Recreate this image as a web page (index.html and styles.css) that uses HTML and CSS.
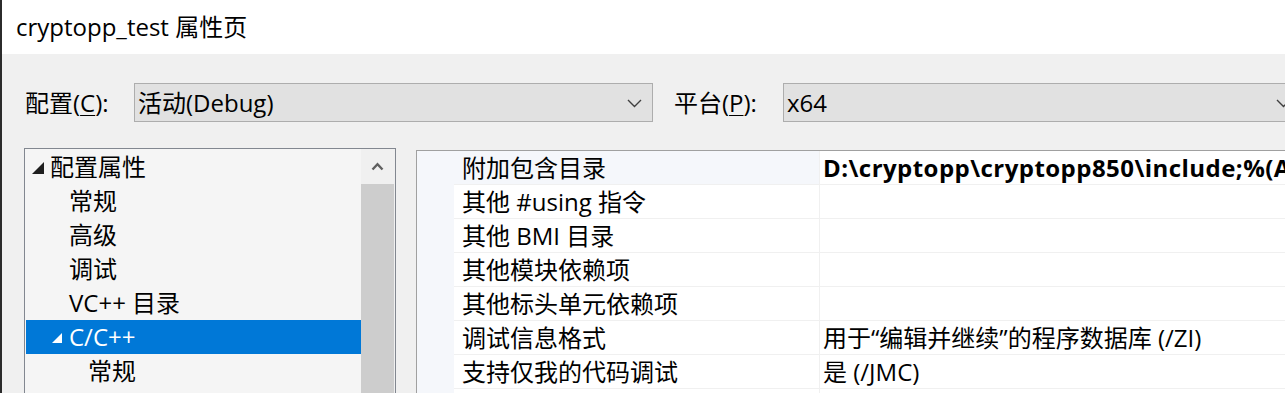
FILE: index.html
```html
<!DOCTYPE html>
<html lang="zh-CN">
<head>
<meta charset="utf-8">
<title>cryptopp_test 属性页</title>
<link rel="stylesheet" href="styles.css">
</head>
<body>
<div class="window">
  <div class="titlebar">cryptopp_test 属性页</div>
  <div class="content">
    <div class="config-row">
      <span class="label">配置(<u>C</u>):</span>
      <div class="combo">
        <span class="combo-text">活动(Debug)</span>
        <svg class="chev" width="15" height="9" viewBox="0 0 15 9"><polyline points="1,1 7.5,7.5 14,1" fill="none" stroke="#404040" stroke-width="1.4"/></svg>
      </div>
      <span class="label label-platform">平台(<u>P</u>):</span>
      <div class="combo">
        <span class="combo-text">x64</span>
        <svg class="chev" width="15" height="9" viewBox="0 0 15 9"><polyline points="1,1 7.5,7.5 14,1" fill="none" stroke="#404040" stroke-width="1.4"/></svg>
      </div>
    </div>
    <div class="panels">
      <div class="tree">
        <div class="tree-list">
          <div class="tree-row lvl0">
            <svg class="tri" width="12" height="12" viewBox="0 0 12 12"><polygon points="12,0 12,12 0,12" fill="#1e1e1e"/></svg>
            <span>配置属性</span>
          </div>
          <div class="tree-row lvl1">常规</div>
          <div class="tree-row lvl1">高级</div>
          <div class="tree-row lvl1">调试</div>
          <div class="tree-row lvl1">VC++ 目录</div>
          <div class="tree-row lvl1x selected">
            <svg class="tri small" width="10" height="10" viewBox="0 0 10 10"><polygon points="10,0 10,10 0,10" fill="#ffffff"/></svg>
            <span>C/C++</span>
          </div>
          <div class="tree-row lvl2">常规</div>
        </div>
        <div class="scrollbar">
          <div class="sb-btn">
            <svg width="13" height="9" viewBox="0 0 13 9"><polyline points="1.5,7.5 6.5,2.2 11.5,7.5" fill="none" stroke="#606060" stroke-width="2.4"/></svg>
          </div>
          <div class="sb-thumb"></div>
        </div>
      </div>
      <div class="grid">
        <div class="gutter"></div>
        <div class="grid-table">
          <div class="grid-row active">
            <div class="cell name">附加包含目录</div>
            <div class="cell value bold">D:\cryptopp\cryptopp850\include;%(AdditionalIncludeDirectories)</div>
          </div>
          <div class="grid-row">
            <div class="cell name">其他 #using 指令</div>
            <div class="cell value"></div>
          </div>
          <div class="grid-row">
            <div class="cell name">其他 BMI 目录</div>
            <div class="cell value"></div>
          </div>
          <div class="grid-row">
            <div class="cell name">其他模块依赖项</div>
            <div class="cell value"></div>
          </div>
          <div class="grid-row">
            <div class="cell name">其他标头单元依赖项</div>
            <div class="cell value"></div>
          </div>
          <div class="grid-row">
            <div class="cell name">调试信息格式</div>
            <div class="cell value">用于“编辑并继续”的程序数据库 (/ZI)</div>
          </div>
          <div class="grid-row">
            <div class="cell name">支持仅我的代码调试</div>
            <div class="cell value">是 (/JMC)</div>
          </div>
          <div class="grid-row">
            <div class="cell name"></div>
            <div class="cell value"></div>
          </div>
        </div>
      </div>
    </div>
  </div>
</div>
</body>
</html>
```
FILE: styles.css
```css
* { box-sizing: border-box; }
html, body {
  margin: 0;
  padding: 0;
  width: 1285px;
  height: 393px;
  overflow: hidden;
  background: #f0f0f0;
}
body {
  font-family: "Open Sans", "Noto Sans CJK SC", sans-serif;
  font-size: 24px;
  color: #000;
}
.window {
  width: 1285px;
  height: 393px;
  border-left: 2px solid #2b2b2b;
  display: flex;
  flex-direction: column;
  overflow: hidden;
}
.titlebar {
  height: 54px;
  flex: none;
  background: #ffffff;
  line-height: 54px;
  padding-left: 14px;
  white-space: nowrap;
}
.content {
  flex: 1;
  background: #f0f0f0;
  min-height: 0;
}
.config-row {
  margin-top: 29px;
  padding-left: 23px;
  display: flex;
  align-items: center;
  height: 39px;
  white-space: nowrap;
}
.label {
  width: 109px;
  flex: none;
  line-height: 39px;
}
.label u {
  text-decoration-thickness: 1px;
  text-underline-offset: 3px;
}
.label-platform {
  margin-left: 21px;
}
.combo {
  width: 519px;
  height: 39px;
  flex: none;
  background: #e1e1e1;
  border: 1px solid #adadad;
  display: flex;
  align-items: center;
  justify-content: space-between;
  padding: 0 10px 0 3px;
}
.combo-text {
  line-height: 37px;
}
.chev {
  display: block;
  margin-top: 2px;
}
.panels {
  margin-top: 26px;
  display: flex;
  align-items: flex-start;
  padding-left: 22px;
}
.tree {
  width: 372px;
  height: 260px;
  flex: none;
  border: 1px solid #828790;
  background: #f5f5f5;
  display: flex;
}
.tree-list {
  flex: 1;
  padding: 1px 0 0 1px;
}
.tree-row {
  height: 34px;
  line-height: 34px;
  display: flex;
  align-items: center;
  white-space: nowrap;
}
.tree-row.lvl0 { padding-left: 6px; }
.tree-row.lvl0 .tri { margin-right: 6px; margin-top: 1px; }
.tree-row.lvl1 { padding-left: 43px; }
.tree-row.lvl1x { padding-left: 26px; }
.tree-row.lvl1x .tri { margin-right: 7px; margin-top: 2px; }
.tree-row.lvl2 { padding-left: 62px; }
.tree-row.selected {
  background: #0078d7;
  color: #ffffff;
}
.tri { flex: none; display: block; }
.scrollbar {
  width: 34px;
  flex: none;
  background: #f0f0f0;
  display: flex;
  flex-direction: column;
}
.sb-btn {
  height: 35px;
  display: flex;
  align-items: center;
  justify-content: center;
  padding-right: 1px;
}
.sb-btn svg { display: block; }
.sb-thumb {
  flex: 1;
  background: #cdcdcd;
  margin-right: 1px;
}
.grid {
  margin-left: 20px;
  margin-top: 2px;
  flex: 1;
  min-width: 0;
  height: 260px;
  border-top: 1px solid #a0a0a0;
  border-left: 1px solid #a0a0a0;
  background: #ffffff;
  display: flex;
  overflow: hidden;
}
.gutter {
  width: 37px;
  flex: none;
  background: #f5f7fb;
}
.grid-table {
  flex: 1;
  min-width: 0;
}
.grid-row {
  display: flex;
  height: 34px;
  border-bottom: 1px solid #f0f0f0;
}
.cell {
  line-height: 33px;
  white-space: nowrap;
  overflow: hidden;
}
.cell.name {
  width: 366px;
  flex: none;
  padding-left: 8px;
  border-right: 1px solid #f0f0f0;
}
.cell.value {
  flex: 1;
  padding-left: 3px;
}
.grid-row.active .cell.name {
  background: #f5f7fb;
}
.bold {
  font-weight: 700;
  letter-spacing: 0.45px;
}
```
